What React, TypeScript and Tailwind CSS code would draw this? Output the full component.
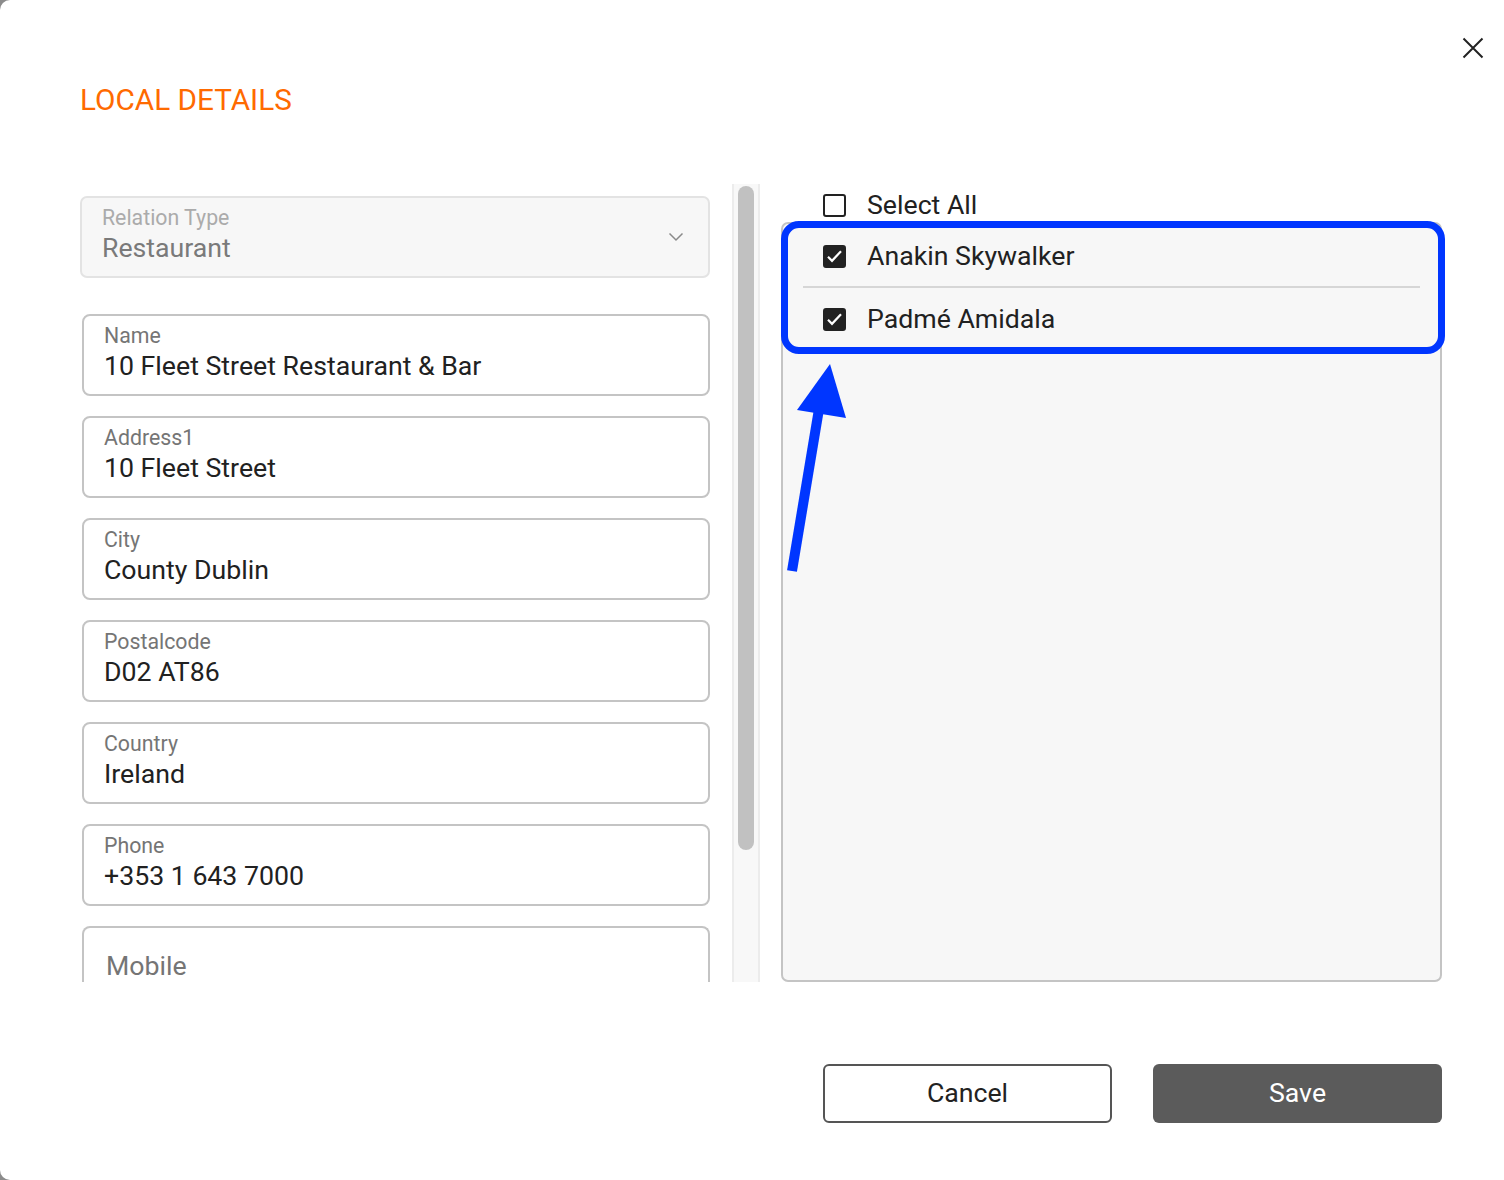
import React from "react";

const fields = [
  { label: "Name", value: "10 Fleet Street Restaurant & Bar" },
  { label: "Address1", value: "10 Fleet Street" },
  { label: "City", value: "County Dublin" },
  { label: "Postalcode", value: "D02 AT86" },
  { label: "Country", value: "Ireland" },
  { label: "Phone", value: "+353 1 643 7000" },
];

const people = ["Anakin Skywalker", "Padmé Amidala"];

const Checkbox = ({ checked }: { checked: boolean }) =>
  checked ? (
    <span className="flex h-[23px] w-[23px] shrink-0 items-center justify-center rounded-[3px] border-2 border-[#222] bg-[#222]">
      <svg width="19" height="19" viewBox="0 0 19 19" fill="none">
        <path d="M3 9.8l4 4L16 4.2" stroke="#fff" strokeWidth="2.2" />
      </svg>
    </span>
  ) : (
    <span className="h-[23px] w-[23px] shrink-0 rounded-[3px] border-2 border-[#222] bg-white" />
  );

const App = () => {
  return (
    <div
      className="h-[1180px] w-[1504px] overflow-hidden bg-[#8c8c8c]"
      style={{ fontFamily: "Roboto, 'Noto Sans', sans-serif" }}
    >
      <div className="relative flex h-full w-full flex-col rounded-l-[10px] bg-white pl-[80px] pr-[62px]">
        {/* close */}
        <button className="absolute right-[20px] top-[37px] flex h-[22px] w-[22px] items-center justify-center">
          <svg width="22" height="22" viewBox="0 0 22 22" fill="none">
            <path d="M1.5 1.5l19 19M20.5 1.5l-19 19" stroke="#222" strokeWidth="2" />
          </svg>
        </button>

        <h1 className="mt-[82px] text-[29.7px] leading-[36px] text-[#ff6a00]">LOCAL DETAILS</h1>

        <div className="mt-[66px] flex h-[798px]">
          {/* left form */}
          <div className="flex w-[630px] flex-col gap-[20px] overflow-hidden pt-[12px]">
            <div className="relative mb-[16px] flex h-[82px] shrink-0 flex-col rounded-[7px] border-2 border-[#e3e3e3] bg-[#f7f7f7] px-[20px] pt-[8px]">
              <span className="text-[21.3px] leading-[24px] text-[#ababab]">Relation Type</span>
              <span className="mt-[3px] text-[26.7px] leading-[30px] text-[#7a7a7a]">Restaurant</span>
              <svg
                className="absolute right-[24px] top-[34px]"
                width="16"
                height="10"
                viewBox="0 0 16 10"
                fill="none"
              >
                <path d="M1.5 1.5L8 8l6.5-6.5" stroke="#8a8a8a" strokeWidth="1.5" />
              </svg>
            </div>
            {fields.map((f) => (
              <div
                key={f.label}
                className="ml-[2px] flex h-[82px] shrink-0 flex-col rounded-[8px] border-2 border-[#c4c4c4] bg-white px-[20px] pt-[8px]"
              >
                <span className="text-[21.3px] leading-[24px] text-[#757575]">{f.label}</span>
                <span className="mt-[3px] text-[26.7px] leading-[30px] text-[#212121]">{f.value}</span>
              </div>
            ))}
            <div className="ml-[2px] flex h-[56px] shrink-0 flex-col rounded-t-[8px] border-2 border-b-0 border-[#c4c4c4] bg-white px-[22px] pt-[26px]">
              <span className="text-[26.7px] leading-[24px] text-[#757575]">Mobile</span>
            </div>
          </div>

          {/* scrollbar */}
          <div className="ml-[22px] flex h-full w-[28px] justify-center border-x-2 border-[#ececec] bg-[#f8f8f8] pt-[2px]">
            <div className="h-[664px] w-[16px] rounded-full bg-[#c1c1c1]" />
          </div>

          {/* right list */}
          <div className="relative ml-[21px] flex flex-1 flex-col">
            <div className="flex h-[38px] items-center gap-[21px] pl-[42px] pt-[4px]">
              <Checkbox checked={false} />
              <span className="text-[26.7px] leading-[30px] text-[#212121]">Select All</span>
            </div>
            <div className="flex flex-1 flex-col rounded-[7px] border-2 border-[#c4c4c4] bg-[#f7f7f7] px-[20px] pt-[2px]">
              {people.map((p, i) => (
                <div
                  key={p}
                  className={
                    "flex h-[62px] items-center gap-[21px] pl-[20px] " +
                    (i === 0 ? "border-b-2 border-[#d6d6d6]" : "")
                  }
                >
                  <Checkbox checked />
                  <span className="text-[26.7px] leading-[30px] text-[#212121]">{p}</span>
                </div>
              ))}
            </div>

            {/* annotation */}
            <div className="absolute left-0 top-[37px] h-[133px] w-[664px] rounded-[18px] border-[7px] border-[#0036ff]" />
            <svg
              className="absolute left-0 top-0"
              width="120"
              height="420"
              viewBox="0 0 120 420"
              fill="none"
            >
              <path d="M11 387L38 225" stroke="#0036ff" strokeWidth="10" />
              <path d="M49 180L16 226L65 234Z" fill="#0036ff" />
            </svg>
          </div>
        </div>

        <div className="mt-[82px] flex justify-end gap-[41px]">
          <button className="h-[59px] w-[289px] rounded-[6px] border-2 border-[#555] bg-white text-[26.7px] text-[#222]">
            Cancel
          </button>
          <button className="h-[59px] w-[289px] rounded-[6px] bg-[#5b5b5b] text-[26.7px] text-white">
            Save
          </button>
        </div>
      </div>
    </div>
  );
};

export default App;
